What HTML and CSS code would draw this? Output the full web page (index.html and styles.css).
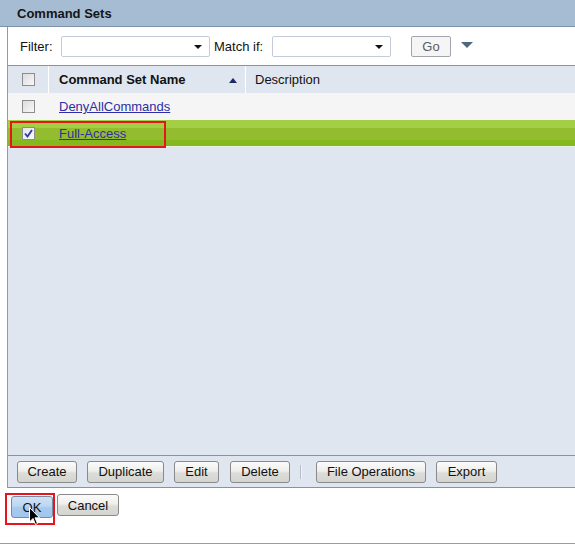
FILE: index.html
```html
<!DOCTYPE html>
<html>
<head>
<meta charset="utf-8">
<link rel="stylesheet" href="styles.css">
</head>
<body>
<div class="titlebar">Command Sets</div>
<div class="frame">
  <div class="filter">
    <span class="lbl lbl-filter">Filter:</span>
    <div class="select s1"><span class="caret"></span></div>
    <span class="lbl lbl-match">Match if:</span>
    <div class="select s2"><span class="caret"></span></div>
    <button class="go">Go</button>
    <span class="menu-tri"></span>
  </div>
  <div class="grid">
    <div class="row head">
      <div class="c-check"><span class="cb"></span></div>
      <div class="c-name">Command Set Name<span class="sort"></span></div>
      <div class="c-desc">Description</div>
    </div>
    <div class="row r1">
      <div class="c-check"><span class="cb"></span></div>
      <div class="c-name"><a href="#">DenyAllCommands</a></div>
      <div class="c-desc"></div>
    </div>
    <div class="row sel">
      <div class="c-check"><span class="cb checked"><svg width="9" height="9" viewBox="0 0 9 9"><path d="M1 4.5 L3.5 7.5 L8 1" fill="none" stroke="#2a3aa0" stroke-width="1.8"/></svg></span></div>
      <div class="c-name"><a href="#">Full-Access</a></div>
      <div class="c-desc"></div>
      <div class="redbox"></div>
    </div>
    <div class="empty"></div>
  </div>
  <div class="toolbar">
    <button class="btn b-create">Create</button>
    <button class="btn b-dup">Duplicate</button>
    <button class="btn b-edit">Edit</button>
    <button class="btn b-del">Delete</button>
    <span class="sep"></span>
    <button class="btn b-file">File Operations</button>
    <button class="btn b-exp">Export</button>
  </div>
</div>
<div class="actions">
  <div class="focus"><button class="btn ok">OK</button></div>
  <button class="btn b-cancel">Cancel</button>
  <svg class="cursor" width="12" height="19" viewBox="0 0 12 19"><path d="M0.5 0.5 L0.5 15 L4 11.5 L6.5 17.5 L8.5 16.5 L6 10.8 L10.5 10.8 Z" fill="#000" stroke="#fff" stroke-width="1"/></svg>
</div>
<div class="bottomline"></div>
</body>
</html>
```

FILE: styles.css
```css
html, body {
  margin: 0;
  padding: 0;
  background: #fff;
  font-family: "Liberation Sans", Arial, sans-serif;
  font-size: 13px;
  color: #111;
  width: 575px;
  overflow: hidden;
}
.titlebar {
  height: 26px;
  line-height: 27px;
  background: #a6bcd2;
  border-bottom: 1px solid #7e93aa;
  padding-left: 17px;
  font-weight: bold;
  color: #151515;
}
.frame {
  margin-left: 7px;
  border-left: 1px solid #8a9cb0;
}
.filter {
  height: 38px;
  border-bottom: 1px solid #8094ab;
  display: flex;
  align-items: center;
  padding-left: 12px;
  background: #fff;
}
.lbl { color: #111; }
.lbl-filter { width: 41px; }
.lbl-match { margin-left: 4px; width: 58px; }
.select {
  position: relative;
  height: 19px;
  border: 1px solid #c3ccd6;
  border-radius: 2px;
  background: #fff;
  box-sizing: content-box;
}
.s1 { width: 147px; }
.s2 { width: 117px; }
.caret {
  position: absolute;
  right: 7px;
  top: 8px;
  width: 0;
  height: 0;
  border-left: 4px solid transparent;
  border-right: 4px solid transparent;
  border-top: 4px solid #111;
}
.go {
  margin-left: 20px;
  width: 40px;
  height: 21px;
  border: 1px solid #a4a4ae;
  border-radius: 2px;
  background: #f5f5f5;
  font-family: "Liberation Sans", Arial, sans-serif;
  font-size: 13px;
  color: #5a5a64;
  padding: 0;
}
.menu-tri {
  margin-left: 10px;
  margin-top: -2px;
  width: 0;
  height: 0;
  border-left: 6px solid transparent;
  border-right: 6px solid transparent;
  border-top: 6px solid #51667f;
}
.grid {
  background: #dfe6ef;
  border-bottom: 1px solid #8094ab;
}
.row {
  display: flex;
  position: relative;
  height: 27px;
  align-items: stretch;
}
.c-check {
  width: 40px;
  display: flex;
  align-items: center;
  justify-content: center;
}
.c-name {
  width: 186px;
  padding-left: 10px;
  display: flex;
  align-items: center;
  position: relative;
}
.c-desc {
  flex: 1;
  padding-left: 9px;
  display: flex;
  align-items: center;
}
.head {
  background: #dfe6ef;
  font-weight: bold;
}
.head .c-check { border-right: 1px solid #fff; }
.head .c-name { border-right: 1px solid #fff; }
.head .c-desc { font-weight: normal; }
.sort {
  position: absolute;
  left: 180px;
  top: 12px;
  width: 0;
  height: 0;
  border-left: 4px solid transparent;
  border-right: 4px solid transparent;
  border-bottom: 5px solid #1c2a6a;
}
.cb {
  width: 11px;
  height: 11px;
  border: 1px solid #8d8d8d;
  background: linear-gradient(135deg, #dcdcdc, #f8f8f8);
  display: flex;
  align-items: center;
  justify-content: center;
}
.cb.checked { background: linear-gradient(135deg, #e4e4e4, #fafafa); }
.r1 {
  background: #f5f5f5;
  height: 27px;
}
.r1 .c-check, .r1 .c-name { border-right: 1px solid transparent; }
a {
  color: #2e2ea6;
  text-decoration: underline;
}
.sel {
  height: 26px;
  background: linear-gradient(to bottom, #a3cf45 0, #a3cf45 8px, #94bc2f 8px, #94bc2f 20px, #84b81f 20px, #84b81f 26px);
  border-bottom: 1px solid #e9ede2;
}
.sel .c-check, .sel .c-name { border-right: 1px solid transparent; }
.redbox {
  position: absolute;
  left: 2px;
  top: 1px;
  width: 152px;
  height: 23px;
  border: 2px solid #e8141c;
}
.empty { height: 308px; }
.toolbar {
  height: 31px;
  background: #dfe6ef;
  border-bottom: 1px solid #8094ab;
  display: flex;
  align-items: center;
  padding-left: 9px;
}
.btn {
  height: 22px;
  padding: 0;
  border: 1px solid #8a8a8a;
  border-radius: 3px;
  background: linear-gradient(to bottom, #fbfbfb 0%, #eeeeec 45%, #dcdcd8 55%, #d4d4d0 100%);
  font-family: "Liberation Sans", Arial, sans-serif;
  font-size: 13px;
  color: #111;
  margin-right: 10px;
}
.b-create { width: 60px; }
.b-dup { width: 77px; }
.b-edit { width: 45px; margin-right: 11px; }
.b-del { width: 60px; }
.sep {
  width: 1px;
  height: 14px;
  background: #b8bec6;
  margin-right: 14px;
  border-right: 1px solid #f2f4f7;
}
.b-file { width: 110px; }
.b-exp { width: 61px; }
.actions {
  position: relative;
  box-sizing: border-box;
  height: 55px;
  display: flex;
  align-items: flex-start;
  padding-left: 5px;
  padding-top: 5px;
}
.focus {
  border: 2px solid #e8141c;
  padding-top: 1px;
  padding-left: 4px;
  box-sizing: border-box;
  height: 32px;
  width: 50px;
}
.ok {
  width: 42px;
  background: linear-gradient(to bottom, #cfe2f6 0%, #bcd6f2 45%, #a6c9ee 55%, #a2c6ec 100%);
  border-color: #7a8aa0;
  margin-right: 0;
}
.b-cancel {
  margin-left: 2px;
  margin-top: 1px;
  width: 62px;
}
.cursor {
  position: absolute;
  left: 29px;
  top: 19px;
}
.bottomline {
  height: 1px;
  background: #9c9c9c;
}
```
